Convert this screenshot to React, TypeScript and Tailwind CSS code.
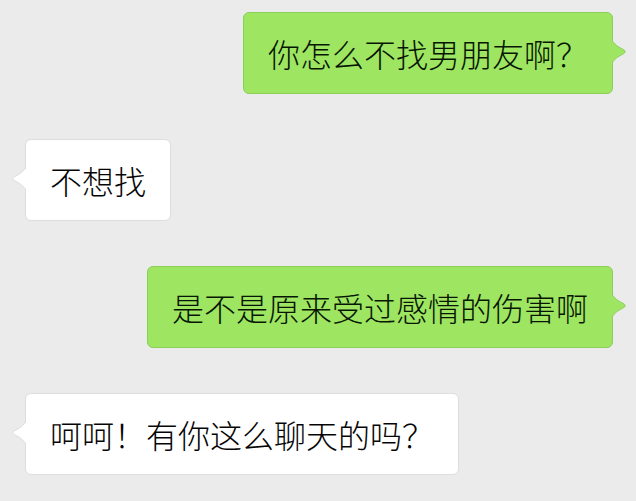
import React from 'react';

type Message = {
  text: string;
  mine: boolean;
};

const messages: Message[] = [
  { text: '你怎么不找男朋友啊？', mine: true },
  { text: '不想找', mine: false },
  { text: '是不是原来受过感情的伤害啊', mine: true },
  { text: '呵呵！有你这么聊天的吗？', mine: false },
];

const Tail: React.FC<{ mine: boolean }> = ({ mine }) => {
  if (mine) {
    return (
      <svg
        className="absolute top-1/2 -translate-y-[55%] -right-[15px]"
        width="17"
        height="26"
        viewBox="0 0 17 26"
      >
        <path d="M1 1 Q6 8 14.5 11.6 Q16 13 14.5 14.4 Q6 18 1 25 Z" fill="#9ee561" stroke="#8ccf58" strokeWidth="1" />
        <rect x="0" y="0" width="2" height="26" fill="#9ee561" />
      </svg>
    );
  }
  return (
    <svg
      className="absolute top-1/2 -translate-y-[55%] -left-[15px]"
      width="17"
      height="26"
      viewBox="0 0 17 26"
    >
      <path d="M16 1 Q11 8 2.5 11.6 Q1 13 2.5 14.4 Q11 18 16 25 Z" fill="#ffffff" stroke="#dddddd" strokeWidth="1" />
      <rect x="15" y="0" width="2" height="26" fill="#ffffff" />
    </svg>
  );
};

const Bubble: React.FC<{ message: Message }> = ({ message }) => {
  const { mine, text } = message;
  return (
    <div className={mine ? 'flex justify-end' : 'flex justify-start'}>
      <div
        className={
          mine
            ? 'relative rounded-[6px] border border-[#8ccf58] bg-[#9ee561] px-[24px] py-[24px]'
            : 'relative rounded-[6px] border border-[#dddddd] bg-white px-[24px] py-[24px]'
        }
      >
        <Tail mine={mine} />
        <p
          className={
            mine
              ? "whitespace-nowrap text-[32px] font-light leading-[32px] text-[#061604] [font-family:'Noto_Sans_CJK_SC',sans-serif]"
              : "whitespace-nowrap text-[32px] font-light leading-[32px] text-[#050505] [font-family:'Noto_Sans_CJK_SC',sans-serif]"
          }
        >
          {text}
        </p>
      </div>
    </div>
  );
};

export default function App() {
  return (
    <div className="h-[501px] w-[636px] overflow-hidden bg-[#ebebeb]">
      <div className="flex flex-col gap-[45px] pl-[25px] pr-[23px] pt-[12px]">
        {messages.map((m, i) => (
          <Bubble key={i} message={m} />
        ))}
      </div>
    </div>
  );
}
